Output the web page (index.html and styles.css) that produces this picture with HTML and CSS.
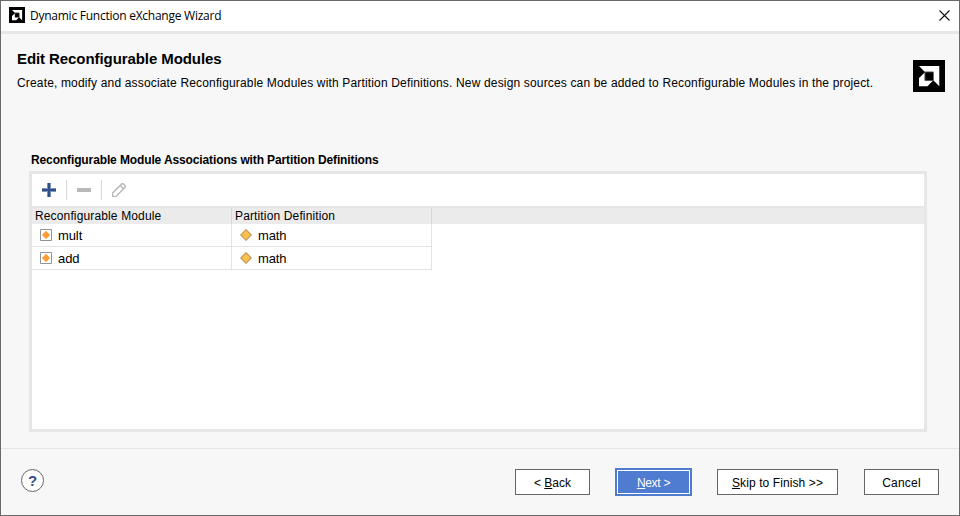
FILE: index.html
```html
<!DOCTYPE html>
<html lang="en">
<head>
<meta charset="utf-8">
<title>Dynamic Function eXchange Wizard</title>
<link rel="stylesheet" href="styles.css">
</head>
<body>
<svg class="defs" width="0" height="0">
  <symbol id="logo" viewBox="0 0 32 32">
    <path d="M0 0h32v32H0z" fill="#000"/>
    <path d="M6 6h20.300v20.300L20.300 20.300v-8.600h-8.600z" fill="#fff"/>
    <path d="M11.700 12.500v8.200h8.200L14.500 26.300H6V18z" fill="#fff"/>
    <path d="M12 20.500V12h8.500v8.500z" fill="#000" stroke="#777" stroke-width=".6"/>
  </symbol>
  <symbol id="module" viewBox="0 0 12 12">
    <path d="M.5.5h11v11H.5z" fill="#fff" stroke="#929292"/>
    <path d="M6 2l3.800 4L6 10 2.200 6z" fill="#ff9d35" stroke="#f7a655" stroke-width=".6"/>
  </symbol>
  <symbol id="partition" viewBox="0 0 12 12">
    <path d="M6 .7L11.300 6 6 11.300.7 6z" fill="#f8c24c" stroke="#c39455" stroke-width="1.100"/>
  </symbol>
</svg>
<div class="window">
  <header class="titlebar">
    <svg class="app-icon"><use href="#logo"/></svg>
    <span class="caption">Dynamic Function eXchange Wizard</span>
    <svg class="close" viewBox="0 0 11 11"><path d="M.5.5l10 10M10.500.5l-10 10" stroke="#111" stroke-width="1.100" fill="none"/></svg>
  </header>
  <main class="content">
    <div class="intro">
      <div>
        <h1>Edit Reconfigurable Modules</h1>
        <p class="description">Create, modify and associate Reconfigurable Modules with Partition Definitions. New design sources can be added to Reconfigurable Modules in the project.</p>
      </div>
      <svg class="brand"><use href="#logo"/></svg>
    </div>
    <h2><span>Reconfigurable Module Associations with Partition Definitions</span></h2>
    <section class="panel">
      <div class="toolbar">
        <svg width="14" height="14" viewBox="0 0 14 14"><path d="M0 7h14M7 0v14" stroke="#8293b8" stroke-width="4" /><path d="M0 7h14M7 0v14" stroke="#2f4f8c" stroke-width="2"/></svg>
        <i class="separator"></i>
        <svg width="14" height="14" viewBox="0 0 14 14"><path d="M0 5h14v4H0z" fill="#b8b8b8"/></svg>
        <i class="separator"></i>
        <svg width="14" height="14" viewBox="0 0 14 14"><path d="M.6 13.400V10L9.800.9q.8-.6 1.600 0l1.700 1.700q.6.8 0 1.600L4 13.400zM8.200 2.500l3.300 3.300" fill="none" stroke="#b8b8b8" stroke-width="1.400"/></svg>
      </div>
      <div class="table">
        <div class="row head"><div class="cell"><span>Reconfigurable Module</span></div><div class="cell"><span>Partition Definition</span></div></div>
        <div class="row"><div class="cell"><svg><use href="#module"/></svg><span>mult</span></div><div class="cell"><svg><use href="#partition"/></svg><span>math</span></div></div>
        <div class="row"><div class="cell"><svg><use href="#module"/></svg><span>add</span></div><div class="cell"><svg><use href="#partition"/></svg><span>math</span></div></div>
      </div>
    </section>
  </main>
  <footer class="footer">
    <button class="help">?</button>
    <button class="button back"><span>&lt; <u>B</u>ack</span></button>
    <button class="button next"><span><u>N</u>ext &gt;</span></button>
    <button class="button skip"><span><u>S</u>kip to Finish &gt;&gt;</span></button>
    <button class="button cancel"><span>Cancel</span></button>
  </footer>
</div>
</body>
</html>
```

FILE: styles.css
```css
* { box-sizing: border-box; }
body { margin: 0; font: 12px/16px "Liberation Sans", Arial, sans-serif; color: #000; }
h1, h2, p { margin: 0; white-space: nowrap; }
svg { display: block; flex: none; }
.defs { position: absolute; }
.window { width: 960px; height: 516px; border: 1px solid #696969; background: #f7f7f7; display: flex; flex-direction: column; overflow: hidden; }
.titlebar { height: 33px; flex: none; border-bottom: 3px solid #e6e6e6; background: #fff; display: flex; align-items: center; padding: 0 9px 0 8px; }
.app-icon { width: 16px; height: 16px; margin-top: -2px; }
.caption { font-family: "Open Sans", "Noto Sans", sans-serif; font-size: 12px; margin-left: 5px; letter-spacing: -.25px; }
.close { width: 11px; height: 11px; margin-left: auto; margin-top: -2px; }
.content { flex: 1; }
.intro { display: flex; justify-content: space-between; height: 118px; padding: 16px 14px 0 16px; }
h1 { font-size: 15px; line-height: 18px; letter-spacing: -.08px; }
.description { margin-top: 7px; letter-spacing: .16px; }
.brand { width: 32px; height: 32px; margin-top: 10px; }
h2 { font-size: 12px; line-height: 16px; height: 19px; padding-left: 30px; letter-spacing: -.12px; }
.panel { width: 898px; height: 261px; margin-left: 28px; border: 3px solid #e6e6e6; background: #fff; }
.toolbar { height: 34px; border-bottom: 2px solid #e6e6e6; display: flex; align-items: center; padding-left: 10px; gap: 10px; }
.separator { width: 1px; height: 20px; background: #d8d8d8; }
.row { display: grid; grid-template-columns: 200px 200px; height: 23px; }
.cell { display: flex; align-items: center; padding-left: 8px; border-right: 1px solid #e3e3e3; border-bottom: 1px solid #e3e3e3; font-size: 13px; letter-spacing: -.1px; }
.cell svg { width: 12px; height: 12px; margin-right: 6px; }
.cell span { padding-top: 2px; }
.head { height: 16px; background: #ebebeb; }
.head .cell { padding-left: 3px; border-bottom: 0; border-color: #d9d9d9; font-size: 12px; letter-spacing: .14px; }
.head .cell span { padding-top: 0; }
.footer { height: 67px; flex: none; border-top: 1px solid #e6e6e6; display: flex; align-items: center; padding: 0 20px; }
button { font: inherit; padding: 0; }
.help { width: 23px; height: 23px; border: 1px solid #666; border-radius: 50%; background: #fff; color: #2f4f8c; font-weight: bold; font-size: 15px; line-height: 20px; margin-top: -3px; }
.button { width: 75px; height: 26px; background: #fff; border: 1px solid #666; color: #000; }
.button span { position: relative; top: 1px; }
.back { margin-left: 471px; }
.next { width: 77px; height: 28px; margin-left: 25px; border: 2px solid #4f7bd0; background: #4f7bd0; color: #fff; box-shadow: inset 0 0 0 1px #fff; letter-spacing: -.3px; }
.skip { width: 121px; margin-left: 25px; letter-spacing: .1px; }
.cancel { margin-left: 26px; letter-spacing: .2px; }
```
